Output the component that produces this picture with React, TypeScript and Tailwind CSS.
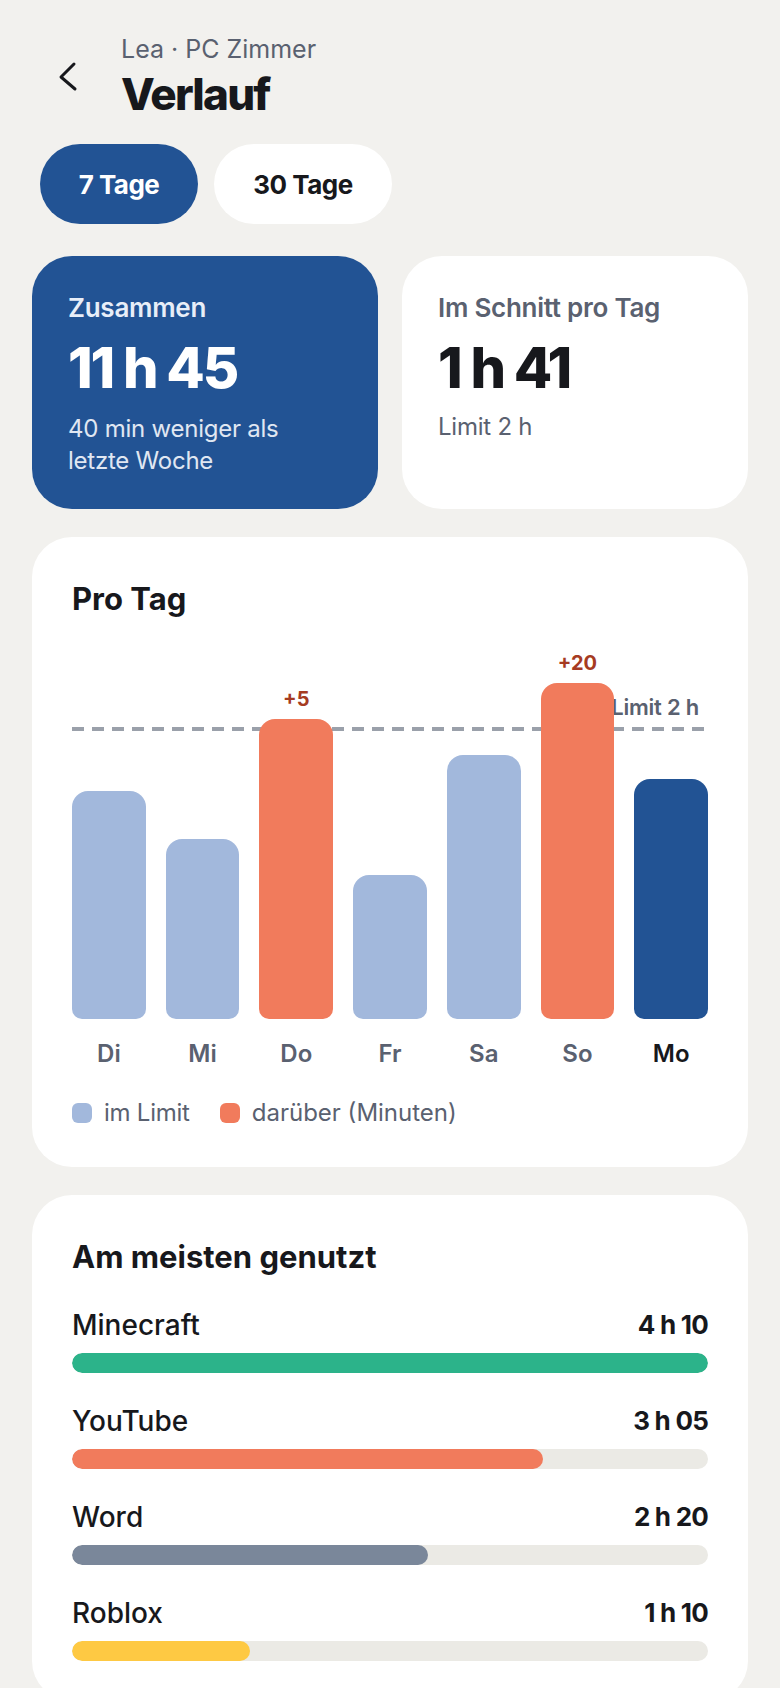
import React from 'react';

const days = [
  { d: 'Di', h: 228, c: 'bg-[#a2b8dc]', over: '' },
  { d: 'Mi', h: 180, c: 'bg-[#a2b8dc]', over: '' },
  { d: 'Do', h: 300, c: 'bg-[#f17b5c]', over: '+5' },
  { d: 'Fr', h: 144, c: 'bg-[#a2b8dc]', over: '' },
  { d: 'Sa', h: 264, c: 'bg-[#a2b8dc]', over: '' },
  { d: 'So', h: 336, c: 'bg-[#f17b5c]', over: '+20' },
  { d: 'Mo', h: 240, c: 'bg-[#225394]', over: '' },
];

const apps = [
  { name: 'Minecraft', time: '4 h 10', pct: 100, c: 'bg-[#2cb38a]' },
  { name: 'YouTube', time: '3 h 05', pct: 74, c: 'bg-[#f17b5c]' },
  { name: 'Word', time: '2 h 20', pct: 56, c: 'bg-[#7a879a]' },
  { name: 'Roblox', time: '1 h 10', pct: 28, c: 'bg-[#fec943]' },
];

export default function App() {
  return (
    <div
      className="min-h-screen w-full bg-[#f2f1ee] text-[#17181c] pb-10"
      style={{ fontFamily: 'Inter, "Noto Sans", sans-serif' }}
    >
      {/* Header */}
      <div className="flex items-center pl-[56px] pt-[33px]">
        <svg width="24" height="32" viewBox="0 0 24 32" className="shrink-0">
          <polyline
            points="18,3 5,16 19,28"
            fill="none"
            stroke="#17181c"
            strokeWidth="3"
            strokeLinecap="round"
            strokeLinejoin="round"
          />
        </svg>
        <div className="ml-[41px] flex flex-col">
          <div className="text-[25px] leading-8 text-[#5a6170]">Lea · PC Zimmer</div>
          <div className="mt-[3px] text-[44px] leading-[52px] font-extrabold tracking-[-0.04em]">Verlauf</div>
        </div>
      </div>

      {/* Period chips */}
      <div className="flex gap-4 px-[40px] mt-6">
        <div className="w-[158px] h-[80px] rounded-full bg-[#225394] text-white flex items-center justify-center text-[26px] font-bold tracking-[-0.02em]">
          7 Tage
        </div>
        <div className="w-[178px] h-[80px] rounded-full bg-white text-[#17181c] flex items-center justify-center text-[26px] font-bold tracking-[-0.02em]">
          30 Tage
        </div>
      </div>

      <div className="px-8 mt-8 flex flex-col gap-7">
        {/* Stat cards */}
        <div className="grid grid-cols-2 gap-6">
          <div className="rounded-[40px] bg-[#225394] pl-9 pr-6 pt-9 pb-8 text-white">
            <div className="text-[26px] leading-8 font-semibold text-[#e8eef8] tracking-[-0.01em]">Zusammen</div>
            <div className="mt-3 text-[56px] leading-[64px] font-extrabold tracking-[-0.04em]">11 h 45</div>
            <div className="mt-[13px] text-[24px] leading-8 text-[#e0e7f2] tracking-[-0.01em]">
              40 min weniger als
              <br />
              letzte Woche
            </div>
          </div>
          <div className="rounded-[40px] bg-white pl-9 pr-6 pt-9 pb-8">
            <div className="text-[26px] leading-8 font-semibold text-[#5a6170] tracking-[-0.01em]">Im Schnitt pro Tag</div>
            <div className="mt-3 text-[56px] leading-[64px] font-extrabold tracking-[-0.04em] text-[#17181c]">1 h 41</div>
            <div className="mt-[11px] text-[24px] leading-8 text-[#5a6170] tracking-[-0.01em]">Limit 2 h</div>
          </div>
        </div>

        {/* Pro Tag */}
        <div className="rounded-[40px] bg-white px-10 pt-11 pb-[38px]">
          <div className="text-[31px] leading-9 font-bold">Pro Tag</div>
          <div className="relative mt-[22px] h-[380px]">
            <svg className="absolute left-0 top-[88px] w-full h-[4px]" preserveAspectRatio="none">
              <line x1="0" y1="2" x2="100%" y2="2" stroke="#9aa0aa" strokeWidth="4" strokeDasharray="12 8" />
            </svg>
            <div className="absolute right-[9px] top-[54px] text-[22px] leading-7 font-semibold text-[#5a6170] tracking-[-0.01em]">
              Limit 2 h
            </div>
            <div className="relative flex h-full items-end gap-5">
              {days.map((b) => (
                <div key={b.d} className="flex flex-1 flex-col items-center justify-end">
                  {b.over ? (
                    <div className="mb-2 text-[20px] leading-6 font-bold text-[#a63b22]">{b.over}</div>
                  ) : null}
                  <div className={`w-full rounded-t-[16px] rounded-b-[10px] ${b.c}`} style={{ height: b.h }} />
                </div>
              ))}
            </div>
          </div>
          <div className="mt-[19px] flex gap-5">
            {days.map((b) => (
              <div
                key={b.d}
                className={`flex-1 text-center text-[24px] leading-8 font-semibold ${b.d === 'Mo' ? 'text-[#17181c]' : 'text-[#5a6170]'}`}
              >
                {b.d}
              </div>
            ))}
          </div>
          <div className="mt-[27px] flex items-center">
            <div className="h-5 w-5 rounded-[6px] bg-[#a2b8dc]" />
            <div className="ml-3 text-[24px] leading-8 text-[#5a6170] tracking-[-0.01em]">im Limit</div>
            <div className="ml-[30px] h-5 w-5 rounded-[6px] bg-[#f17b5c]" />
            <div className="ml-3 text-[24px] leading-8 text-[#5a6170]">darüber (Minuten)</div>
          </div>
        </div>

        {/* Am meisten genutzt */}
        <div className="rounded-[40px] bg-white px-10 pt-11 pb-10">
          <div className="text-[31px] leading-9 font-bold">Am meisten genutzt</div>
          <div className="mt-8 flex flex-col gap-[30px]">
            {apps.map((a) => (
              <div key={a.name}>
                <div className="flex items-center justify-between leading-9">
                  <span className="text-[28px] font-medium">{a.name}</span>
                  <span className="text-[26px] font-bold tracking-[-0.03em]">{a.time}</span>
                </div>
                <div className="mt-[10px] h-5 w-full rounded-full bg-[#ebeae5] overflow-hidden">
                  <div className={`h-full rounded-full ${a.c}`} style={{ width: `${a.pct}%` }} />
                </div>
              </div>
            ))}
          </div>
        </div>
      </div>
    </div>
  );
}
